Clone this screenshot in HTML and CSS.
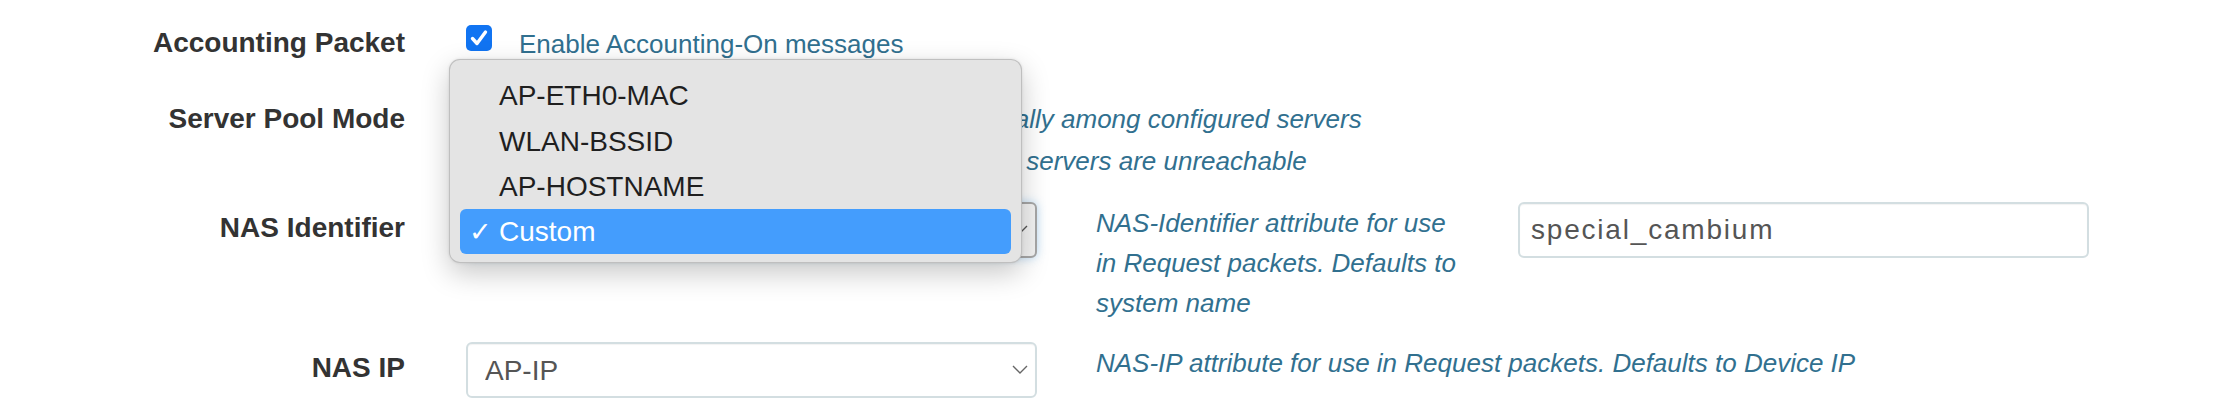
FILE: index.html
```html
<!DOCTYPE html>
<html lang="en">
<head>
<meta charset="utf-8">
<title>RADIUS Accounting</title>
<link rel="stylesheet" href="styles.css">
</head>
<body>
<div class="form">
  <div class="row row-acct">
    <div class="label">Accounting Packet</div>
    <div class="control check-line">
      <span class="checkbox" role="checkbox" aria-checked="true">
        <svg width="26" height="26" viewBox="0 0 26 26"><path d="M6.5 13.5 L11 18.5 L19.5 7" fill="none" stroke="#fff" stroke-width="3.4" stroke-linecap="round" stroke-linejoin="round"/></svg>
      </span>
      <span class="check-text">Enable Accounting-On messages</span>
    </div>
  </div>

  <div class="row row-pool">
    <div class="label">Server Pool Mode</div>
    <div class="control radios">
      <div class="radio-line"><span class="radio on"></span><span class="help">Load Balancing – Requests distributed equally among configured servers</span></div>
      <div class="radio-line"><span class="radio"></span><span class="help">Failover – Backup servers used when other servers are unreachable</span></div>
    </div>
  </div>

  <div class="row row-nasid">
    <div class="label label-field">NAS Identifier</div>
    <div class="control">
      <div class="select-wrap">
        <select class="select select-open"><option>Custom</option></select>
        <svg class="chevron" width="16" height="9" viewBox="0 0 16 9"><polyline points="1,1 8,8 15,1" fill="none" stroke="#555" stroke-width="1.4"/></svg>
      </div>
    </div>
    <div class="desc help">NAS-Identifier attribute for use in Request packets. Defaults to system name</div>
    <div class="field"><input class="text-input" type="text" value="special_cambium"></div>
  </div>

  <div class="row row-nasip">
    <div class="label label-field">NAS IP</div>
    <div class="control">
      <div class="select-wrap">
        <select class="select"><option>AP-IP</option></select>
        <svg class="chevron" width="16" height="9" viewBox="0 0 16 9"><polyline points="1,1 8,8 15,1" fill="none" stroke="#666" stroke-width="1.4"/></svg>
      </div>
    </div>
    <div class="desc desc-wide help">NAS-IP attribute for use in Request packets. Defaults to Device IP</div>
  </div>

  <div class="menu" role="listbox">
    <div class="menu-item"><span class="mark"></span>AP-ETH0-MAC</div>
    <div class="menu-item"><span class="mark"></span>WLAN-BSSID</div>
    <div class="menu-item"><span class="mark"></span>AP-HOSTNAME</div>
    <div class="menu-item selected"><span class="mark">✓</span>Custom</div>
  </div>
</div>
</body>
</html>
```

FILE: styles.css
```css
* { box-sizing: border-box; }

html, body {
  margin: 0;
  background: #ffffff;
}

body {
  font-family: "Liberation Sans", Arial, Helvetica, sans-serif;
  color: #333333;
  overflow: hidden;
}

.form {
  position: relative;
  width: 2234px;
  height: 414px;
  padding-top: 22px;
}

.row {
  display: grid;
  grid-template-columns: 466px 630px 422px 571px;
  align-items: start;
}

.label {
  padding-right: 61px;
  text-align: right;
  font-weight: bold;
  font-size: 28px;
  line-height: 42px;
  color: #333333;
  white-space: nowrap;
}

.label-field {
  line-height: 52px;
}

.control {
  padding-right: 59px;
}

.help {
  color: #31708f;
  font-style: italic;
  font-size: 26px;
}

/* Row 1 */
.check-line {
  display: flex;
  align-items: flex-start;
  gap: 27px;
  height: 42px;
}

.checkbox {
  display: inline-flex;
  width: 26px;
  height: 26px;
  margin-top: 3px;
  border-radius: 5px;
  background: #1174f2;
  flex: none;
}

.check-text {
  color: #31708f;
  font-size: 26px;
  line-height: 44px;
  white-space: nowrap;
}

/* Row 2 */
.row-pool {
  margin-top: 34px;
}

.radio-line {
  display: flex;
  align-items: center;
  gap: 27px;
  height: 42px;
  white-space: nowrap;
}

.radio {
  width: 26px;
  height: 26px;
  border-radius: 50%;
  border: 2px solid #9a9a9a;
  background: #fff;
  flex: none;
}

.radio.on {
  border: 8px solid #1174f2;
}

.radio-line .help {
  line-height: 42px;
}

/* Row 3 / 4 */
.row-nasid {
  margin-top: 20px;
}

.row-nasip {
  margin-top: 19px;
}

.select-wrap {
  position: relative;
  width: 571px;
  height: 56px;
}

.select {
  appearance: none;
  -webkit-appearance: none;
  width: 100%;
  height: 56px;
  margin: 0;
  padding: 0 40px 0 17px;
  border: 2px solid #d3dee1;
  border-radius: 6px;
  background: #ffffff;
  font-family: "Liberation Sans", Arial, Helvetica, sans-serif;
  font-size: 28px;
  color: #555555;
  box-shadow: inset 0 1px 1px rgba(0, 0, 0, 0.05);
}

.select-open {
  border-color: #a7a7a7;
  background: #f3f3f3;
  box-shadow: 0 0 10px rgba(102, 175, 233, 0.45);
}

.chevron {
  position: absolute;
  right: 9px;
  top: 23px;
}

.desc {
  margin-top: 1px;
  padding-right: 50px;
  line-height: 40px;
}

.desc-wide {
  grid-column: 3 / span 2;
  white-space: nowrap;
}

.text-input {
  width: 571px;
  height: 56px;
  margin: 0;
  padding: 0 11px;
  border: 2px solid #d3dee1;
  border-radius: 6px;
  font-family: "Liberation Sans", Arial, Helvetica, sans-serif;
  font-size: 28px;
  letter-spacing: 1.8px;
  color: #555555;
  background: #fff;
  box-shadow: inset 0 1px 1px rgba(0, 0, 0, 0.05);
}

/* Native-like dropdown menu overlay */
.menu {
  position: absolute;
  left: 449px;
  top: 59px;
  width: 573px;
  padding: 13px 10px 8px 10px;
  border: 1px solid rgba(0, 0, 0, 0.16);
  border-radius: 11px;
  background: #e4e4e4;
  box-shadow: 0 10px 28px rgba(0, 0, 0, 0.22), 0 0 3px rgba(0, 0, 0, 0.1);
}

.menu-item {
  display: flex;
  align-items: center;
  height: 45px;
  font-size: 28px;
  color: #1f1f1f;
  border-radius: 6px;
  white-space: nowrap;
}

.mark {
  display: inline-block;
  width: 39px;
  padding-left: 9px;
  font-size: 27px;
}

.menu-item:nth-child(1) {
  height: 46px;
}

.menu-item.selected {
  background: #449dfd;
  color: #ffffff;
}
```
